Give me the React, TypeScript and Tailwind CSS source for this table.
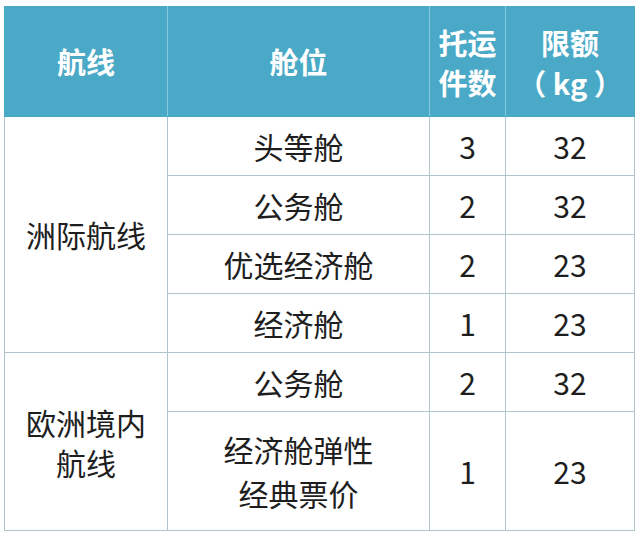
const FONT = { fontFamily: '"Microsoft YaHei", "Noto Sans CJK SC", "Noto Sans", sans-serif' };

const rows = [
  { cabin: "头等舱", count: "3", limit: "32" },
  { cabin: "公务舱", count: "2", limit: "32" },
  { cabin: "优选经济舱", count: "2", limit: "23" },
  { cabin: "经济舱", count: "1", limit: "23" },
];

const cell = "border border-[#aec6cb] text-center align-middle p-0";

export default function App() {
  return (
    <div className="w-[640px] h-[541px] bg-white pt-[6px] pl-[4px]" style={FONT}>
      <table className="border-collapse table-fixed w-[630px] text-[30px] text-[#1e1e1e]">
        <colgroup>
          <col className="w-[163px]" />
          <col className="w-[262px]" />
          <col className="w-[76px]" />
          <col className="w-[129px]" />
        </colgroup>
        <thead>
          <tr className="h-[110px] bg-[#4aa9c6] text-white font-bold text-[29px]">
            <th className="border border-[#4aa9c6] border-r-[#86cbdc] text-center align-middle p-0">航线</th>
            <th className="border border-[#4aa9c6] border-r-[#86cbdc] text-center align-middle p-0">舱位</th>
            <th className="border border-[#4aa9c6] border-r-[#86cbdc] text-center align-middle p-0 leading-[40px]">
              托运
              <br />
              件数
            </th>
            <th className="border border-[#4aa9c6] text-center align-middle p-0 leading-[40px]">
              限额
              <br />
              （ kg ）
            </th>
          </tr>
        </thead>
        <tbody>
          {rows.map((r, i) => (
            <tr key={i} className="h-[59px]">
              {i === 0 && (
                <td rowSpan={4} className={cell}>
                  洲际航线
                </td>
              )}
              <td className={cell}>{r.cabin}</td>
              <td className={cell}>{r.count}</td>
              <td className={cell}>{r.limit}</td>
            </tr>
          ))}
          <tr className="h-[59px]">
            <td rowSpan={2} className={`${cell} leading-[40px]`}>
              欧洲境内
              <br />
              航线
            </td>
            <td className={cell}>公务舱</td>
            <td className={cell}>2</td>
            <td className={cell}>32</td>
          </tr>
          <tr className="h-[119px]">
            <td className={`${cell} leading-[44px]`}>
              经济舱弹性
              <br />
              经典票价
            </td>
            <td className={cell}>1</td>
            <td className={cell}>23</td>
          </tr>
        </tbody>
      </table>
    </div>
  );
}
